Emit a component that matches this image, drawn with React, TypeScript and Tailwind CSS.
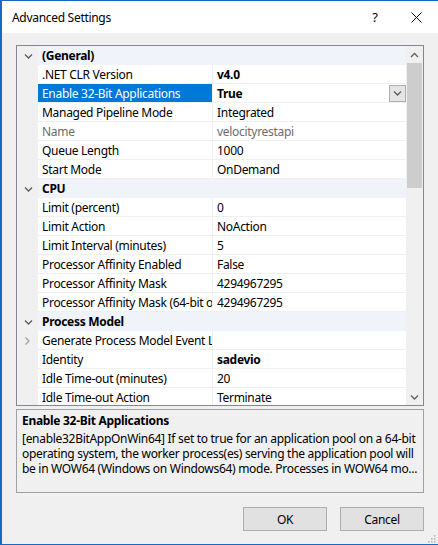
import type { ReactNode } from "react";

type Row =
    | { kind: "category"; label: string }
    | {
          kind: "property";
          name: string;
          value?: string;
          bold?: boolean;
          disabled?: boolean;
          expandable?: boolean;
          selected?: boolean;
      };

const rows: Row[] = [
    { kind: "category", label: "(General)" },
    { kind: "property", name: ".NET CLR Version", value: "v4.0", bold: true },
    { kind: "property", name: "Enable 32-Bit Applications", value: "True", bold: true, selected: true },
    { kind: "property", name: "Managed Pipeline Mode", value: "Integrated" },
    { kind: "property", name: "Name", value: "velocityrestapi", disabled: true },
    { kind: "property", name: "Queue Length", value: "1000" },
    { kind: "property", name: "Start Mode", value: "OnDemand" },
    { kind: "category", label: "CPU" },
    { kind: "property", name: "Limit (percent)", value: "0" },
    { kind: "property", name: "Limit Action", value: "NoAction" },
    { kind: "property", name: "Limit Interval (minutes)", value: "5" },
    { kind: "property", name: "Processor Affinity Enabled", value: "False" },
    { kind: "property", name: "Processor Affinity Mask", value: "4294967295" },
    { kind: "property", name: "Processor Affinity Mask (64-bit option)", value: "4294967295" },
    { kind: "category", label: "Process Model" },
    { kind: "property", name: "Generate Process Model Event Log Entry", expandable: true },
    { kind: "property", name: "Identity", value: "sadevio", bold: true },
    { kind: "property", name: "Idle Time-out (minutes)", value: "20" },
    { kind: "property", name: "Idle Time-out Action", value: "Terminate" },
];

function Chevron({ dir, className }: { dir: "down" | "up" | "right"; className?: string }) {
    const d =
        dir === "down"
            ? "M1 1.5 L4.5 5 L8 1.5"
            : dir === "up"
              ? "M1 5 L4.5 1.5 L8 5"
              : "M2.5 0.5 L6 4 L2.5 7.5";
    return (
        <svg
            width="9"
            height={dir === "right" ? 8 : 6}
            viewBox={dir === "right" ? "0 0 9 8" : "0 0 9 6"}
            className={className}
        >
            <path d={d} fill="none" stroke="currentColor" strokeWidth="1.3" />
        </svg>
    );
}

function GridRow({ row }: { row: Row }) {
    if (row.kind === "category") {
        return (
            <div className="flex h-[19px] shrink-0 bg-[#f0f0f0]">
                <div className="flex w-[21px] items-center justify-center pl-[1px] text-[#5c5c5c]">
                    <Chevron dir="down" />
                </div>
                <div className="flex flex-1 items-center bg-[#f0f3f9] pl-[4px] font-bold">
                    {row.label}
                </div>
            </div>
        );
    }

    return (
        <div className="flex h-[19px] shrink-0">
            <div className="flex w-[21px] items-center justify-center bg-[#f0f0f0] text-[#a0a0a0]">
                {row.expandable && <Chevron dir="right" />}
            </div>
            <div
                className={`flex w-[174px] items-center overflow-hidden whitespace-nowrap border-b border-[#f0f0f0] pl-[4px] ${
                    row.selected ? "bg-[#0078d7] text-white" : row.disabled ? "bg-white text-[#6d6d6d]" : "bg-white"
                }`}
            >
                {row.name}
            </div>
            <div className="w-px bg-[#f0f0f0]" />
            <div
                className={`flex flex-1 items-center overflow-hidden whitespace-nowrap border-b border-[#f0f0f0] bg-white pl-[4px] ${
                    row.bold ? "font-bold" : ""
                } ${row.disabled ? "text-[#6d6d6d]" : ""}`}
            >
                <span className="flex-1">{row.value}</span>
                {row.selected && (
                    <span className="flex h-[17px] w-[17px] items-center justify-center border border-[#adadad] bg-[#e5e5e5] text-[#5c5c5c]">
                        <Chevron dir="down" />
                    </span>
                )}
            </div>
        </div>
    );
}

function DialogButton({ children }: { children: ReactNode }) {
    return (
        <button className="flex h-[24px] w-[84px] items-center justify-center border border-[#adadad] bg-[#e1e1e1] text-[12px] text-black">
            {children}
        </button>
    );
}

export default function App() {
    return (
        <div className="flex h-[545px] w-[438px] flex-col overflow-hidden border-t border-b border-l-2 border-[#1769c6] bg-[#f0f0f0] font-['Noto_Sans',sans-serif] text-[12px] leading-[15px] tracking-[-0.3px] text-black">
            {/* title bar */}
            <div className="flex h-[32px] shrink-0 items-center bg-white pl-[10px]">
                <span className="flex-1 text-[12px]">Advanced Settings</span>
                <span className="w-[20px] text-center text-[13px]">?</span>
                <span className="ml-[25px] mr-[16px] flex h-[12px] w-[12px] items-center justify-center">
                    <svg width="11" height="11" viewBox="0 0 11 11">
                        <path d="M0.5 0.5 L10.5 10.5 M10.5 0.5 L0.5 10.5" stroke="#111" strokeWidth="1" />
                    </svg>
                </span>
            </div>

            <div className="flex flex-1 flex-col px-[14px] pt-[12px]">
                {/* property grid */}
                <div className="flex h-[361px] shrink-0 border border-[#828790] bg-white">
                    <div className="flex flex-1 flex-col overflow-hidden">
                        {rows.map((row, i) => (
                            <GridRow key={i} row={row} />
                        ))}
                    </div>
                    <div className="flex w-[17px] flex-col bg-[#f0f0f0]">
                        <div className="flex h-[17px] items-center justify-center text-[#606060]">
                            <Chevron dir="up" />
                        </div>
                        <div className="mx-[1px] h-[125px] bg-[#cdcdcd]" />
                        <div className="flex-1" />
                        <div className="flex h-[17px] items-center justify-center text-[#606060]">
                            <Chevron dir="down" />
                        </div>
                    </div>
                </div>

                {/* description */}
                <div className="mt-[3px] h-[84px] shrink-0 overflow-hidden whitespace-nowrap border border-[#a0a0a0] px-[5px] pt-[3px]">
                    <div className="font-bold">Enable 32-Bit Applications</div>
                    <p className="mt-[3px]">
                        [enable32BitAppOnWin64] If set to true for an application pool on a 64-bit
                        <br />
                        operating system, the worker process(es) serving the application pool will
                        <br />
                        be in WOW64 (Windows on Windows64) mode. Processes in WOW64 mo...
                    </p>
                </div>

                {/* buttons */}
                <div className="mt-[14px] flex justify-end gap-[13px]">
                    <DialogButton>OK</DialogButton>
                    <DialogButton>Cancel</DialogButton>
                </div>
            </div>

            {/* resize grip */}
            <div className="relative">
                <svg width="8" height="8" viewBox="0 0 8 8" className="absolute bottom-[1px] right-[2px]">
                    <rect x="6" y="0" width="1.5" height="1.5" fill="#b0b0b0" />
                    <rect x="3" y="3" width="1.5" height="1.5" fill="#b0b0b0" />
                    <rect x="6" y="3" width="1.5" height="1.5" fill="#b0b0b0" />
                    <rect x="0" y="6" width="1.5" height="1.5" fill="#b0b0b0" />
                    <rect x="3" y="6" width="1.5" height="1.5" fill="#b0b0b0" />
                    <rect x="6" y="6" width="1.5" height="1.5" fill="#b0b0b0" />
                </svg>
            </div>
        </div>
    );
}
